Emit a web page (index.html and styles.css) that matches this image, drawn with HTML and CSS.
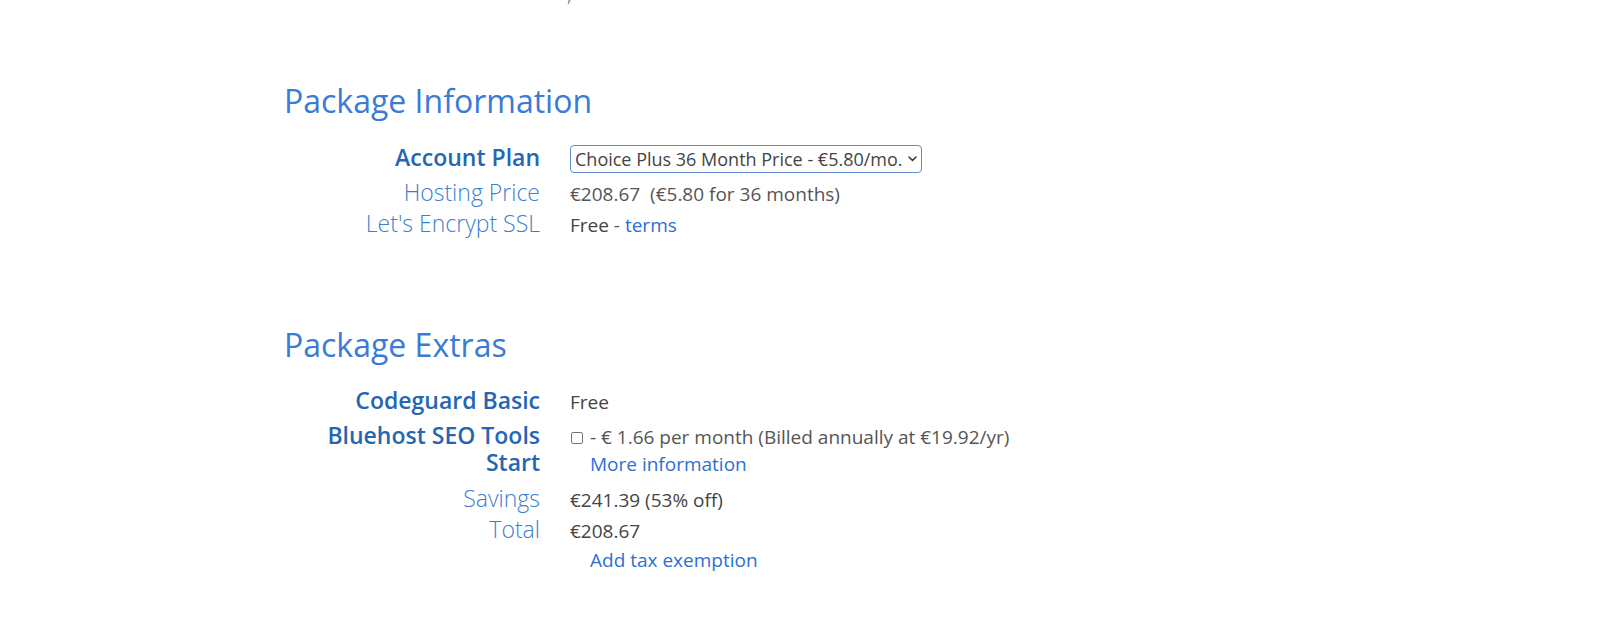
FILE: index.html
```html
<!DOCTYPE html>
<html lang="en">
<head>
<meta charset="utf-8">
<title>Package Information</title>
<link rel="stylesheet" href="styles.css">
</head>
<body>
<main class="page">
  <div class="clip"><span class="clip-text">,</span></div>

  <section class="pkg pkg-info">
    <h2 class="pkg-title">Package Information</h2>
    <div class="rows">
      <div class="label strong">Account Plan</div>
      <div class="value">
        <div class="select-wrap">
          <select class="plan-select">
            <option>Choice Plus 36 Month Price - €5.80/mo.</option>
          </select>
          <svg class="chev" width="9" height="6" viewBox="0 0 9 6"><path d="M1 1l3.5 3.5L8 1" fill="none" stroke="#333" stroke-width="1.5" stroke-linecap="round" stroke-linejoin="round"/></svg>
        </div>
      </div>

      <div class="label">Hosting Price</div>
      <div class="value">€208.67&nbsp; (€5.80 for 36 months)</div>

      <div class="label">Let's Encrypt SSL</div>
      <div class="value"><span class="dark">Free</span> - <a class="link" href="#">terms</a></div>
    </div>
  </section>

  <section class="pkg pkg-extras">
    <h2 class="pkg-title">Package Extras</h2>
    <div class="rows">
      <div class="label strong row-cg">Codeguard Basic</div>
      <div class="value row-cg"><span class="dark">Free</span></div>

      <div class="label strong row-seo">Bluehost SEO Tools Start</div>
      <div class="value row-seo">
        <div class="seo-line"><input type="checkbox" class="chk"> - € 1.66 per month (Billed annually at €19.92/yr)</div>
        <div class="indent"><a class="link" href="#">More information</a></div>
      </div>

      <div class="label">Savings</div>
      <div class="value"><span class="dark">€241.39 (53% off)</span></div>

      <div class="label">Total</div>
      <div class="value"><span class="dark">€208.67</span></div>

      <div class="label"></div>
      <div class="value"><div class="indent"><a class="link" href="#">Add tax exemption</a></div></div>
    </div>
  </section>
</main>
</body>
</html>
```

FILE: styles.css
```css
html, body {
  margin: 0;
  padding: 0;
  background: #ffffff;
}

body {
  font-family: "Open Sans", "Noto Sans", "Liberation Sans", sans-serif;
  color: #555555;
}

.page {
  padding-left: 284px;
  width: 900px;
}

.clip {
  height: 5px;
  overflow: hidden;
  padding-left: 283px;
}

.clip-text {
  display: block;
  font-size: 17px;
  line-height: 20px;
  margin-top: -14px;
  color: #888;
}

.pkg-info {
  padding-top: 76px;
}

.pkg-extras {
  padding-top: 86px;
}

.pkg-title {
  margin: 0;
  font-size: 32px;
  line-height: 40px;
  font-weight: 400;
  color: #3a7bd5;
}

.rows {
  display: grid;
  grid-template-columns: 256px 1fr;
  column-gap: 30px;
  row-gap: 2px;
  align-items: baseline;
  margin-top: 23px;
}

.pkg-extras .rows {
  margin-top: 22px;
}

.label {
  text-align: right;
  font-size: 23px;
  line-height: 27px;
  font-weight: 300;
  color: #3b80cf;
}

.label.strong {
  font-weight: 600;
  color: #2566b4;
}

.value {
  font-size: 19px;
  line-height: 27px;
  color: #555555;
}

.dark {
  color: #444444;
}

.link {
  color: #2e6fd2;
  text-decoration: none;
}

.select-wrap {
  position: relative;
  display: inline-block;
  margin-bottom: 4px;
}

.plan-select {
  appearance: none;
  -webkit-appearance: none;
  font-family: inherit;
  font-size: 18px;
  color: #444444;
  width: 352px;
  height: 28px;
  padding: 0 14px 0 4px;
  border: 1px solid #5d8ad0;
  border-radius: 4px;
  background: #ffffff;
}

.chev {
  position: absolute;
  right: 5px;
  top: 11px;
  pointer-events: none;
}

.row-cg {
  padding-bottom: 4px;
}

.row-seo {
  line-height: 26.5px;
  padding-bottom: 6px;
}

.seo-line {
  line-height: 26.5px;
}

.indent {
  padding-left: 20px;
}

.chk {
  appearance: none;
  -webkit-appearance: none;
  width: 12px;
  height: 12px;
  margin: 0 2px 0 1px;
  border: 1px solid #777777;
  border-radius: 2px;
  background: #ffffff;
  vertical-align: 0;
}
```
